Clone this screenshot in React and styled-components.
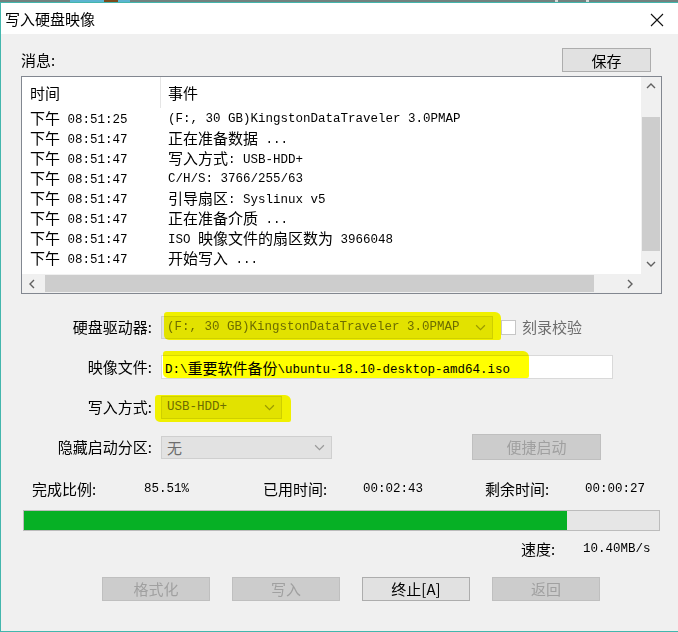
import React from 'react';
import styled, { createGlobalStyle } from 'styled-components';

const GlobalStyle = createGlobalStyle`
  html, body { margin: 0; padding: 0; background: #f0f0f0; }
  body { font-family: "Noto Sans CJK SC", "Noto Sans", sans-serif; color: #000; }
  * { box-sizing: border-box; }
`;

const TEAL = '#43b6ad';
const UI = '"Noto Sans CJK SC", "Noto Sans", sans-serif';
const MONO = '"Liberation Mono", "Noto Sans CJK SC", monospace';

const Frame = styled.div`
  width: 678px;
  height: 632px;
  display: flex;
  flex-direction: column;
  overflow: hidden;
`;

const DesktopStrip = styled.div`
  height: 2px;
  flex: none;
  background: linear-gradient(90deg, #73817f 0 70px, #5cb4d0 70px 104px, #7b4a1c 104px 118px, #5cb4d0 118px 130px, #73817f 130px 555px, #d8d8d8 555px 558px, #73817f 558px 586px, #d8d8d8 586px 589px, #73817f 589px);
`;

const Window = styled.div`
  flex: 1;
  display: flex;
  flex-direction: column;
  border-left: 1px solid ${TEAL};
  border-top: 1px solid ${TEAL};
  border-bottom: 1px solid ${TEAL};
  background: #f0f0f0;
`;

const TitleBar = styled.div`
  height: 31px;
  flex: none;
  background: #fff;
  display: flex;
  align-items: center;
  justify-content: space-between;
  padding: 0 13px 0 4px;
`;

const TitleText = styled.span`
  font-family: ${UI};
  font-size: 15px;
  line-height: 20px;
  margin-top: 1px;
`;

const CloseBtn = styled.div`
  width: 16px;
  height: 16px;
  display: flex;
  align-items: center;
  justify-content: center;
  margin-top: 2px;
`;

const Body = styled.div`
  flex: 1;
  display: flex;
  flex-direction: column;
`;

const MsgSection = styled.div`
  padding: 0 16px 0 20px;
  display: flex;
  flex-direction: column;
`;

const MsgHeader = styled.div`
  margin-top: 14px;
  height: 24px;
  display: flex;
  align-items: center;
  justify-content: space-between;
`;

const Label = styled.span`
  font-family: ${UI};
  font-size: 15px;
  line-height: 20px;
  color: ${p => (p.$disabled ? '#6d6d6d' : '#000')};
`;

const SaveButton = styled.div`
  width: 89px;
  height: 24px;
  margin-right: 11px;
  background: #e1e1e1;
  border: 1px solid #adadad;
  display: flex;
  align-items: center;
  justify-content: center;
  font-family: ${UI};
  font-size: 15px;
`;

const ListBox = styled.div`
  margin-top: 4px;
  height: 218px;
  border: 1px solid #828790;
  background: #fff;
  display: grid;
  grid-template-columns: 1fr 20px;
  grid-template-rows: 1fr 19px;
`;

const ListContent = styled.div`
  overflow: hidden;
`;

const ListHeader = styled.div`
  height: 31px;
  display: flex;
`;

const HeaderCell = styled.div`
  width: ${p => p.$w || 'auto'};
  flex: ${p => (p.$w ? 'none' : 1)};
  padding-left: ${p => p.$pad}px;
  border-right: ${p => (p.$divider ? '1px solid #e5e5e5' : 'none')};
  font-family: ${UI};
  font-size: 15px;
  line-height: 31px;
`;

const ListRow = styled.div`
  height: 20px;
  display: flex;
  align-items: center;
  font-family: ${MONO};
  font-size: 12.5px;
  line-height: 20px;
  white-space: nowrap;
  padding-top: 1px;
`;

const Cell = styled.div`
  width: ${p => p.$w || 'auto'};
  flex: ${p => (p.$w ? 'none' : 1)};
  padding-left: ${p => p.$pad}px;
`;

const Han = styled.span`
  font-family: "Noto Sans CJK SC", sans-serif;
  font-size: 15px;
  vertical-align: -1px;
`;

const VScroll = styled.div`
  background: #f0f0f0;
  display: flex;
  flex-direction: column;
`;

const HScroll = styled.div`
  background: #f0f0f0;
  display: flex;
  align-items: center;
`;

const Corner = styled.div`
  background: #f0f0f0;
`;

const ArrowBox = styled.div`
  flex: none;
  width: ${p => p.$w || 20}px;
  height: ${p => p.$h || 19}px;
  display: flex;
  align-items: center;
  justify-content: center;
`;

const VTrack = styled.div`
  flex: 1;
  padding: 0 1px;
`;

const VThumb = styled.div`
  margin-top: 20px;
  height: 134px;
  background: #cdcdcd;
`;

const HTrack = styled.div`
  flex: 1;
  height: 100%;
  display: flex;
  align-items: center;
`;

const HThumb = styled.div`
  margin-left: 1px;
  width: 549px;
  height: 17px;
  background: #cdcdcd;
`;

const Form = styled.div`
  margin-top: 21px;
  display: flex;
  flex-direction: column;
  gap: 16px;
`;

const FormRow = styled.div`
  height: 24px;
  display: flex;
  align-items: center;
`;

const FieldLabel = styled.span`
  width: 151px;
  margin-right: 9px;
  text-align: right;
  font-family: ${UI};
  font-size: 15px;
  line-height: 20px;
`;

const Combo = styled.div`
  position: relative;
  width: ${p => p.$w}px;
  height: 23px;
  background: #e2e2e2;
  border: 1px solid #cfcfcf;
  display: flex;
  align-items: center;
  justify-content: space-between;
  padding-left: 5px;
  color: #6d6d6d;
  font-family: ${MONO};
  font-size: 12.5px;
  white-space: nowrap;
`;

const ComboArrow = styled.div`
  width: 24px;
  height: 100%;
  display: flex;
  align-items: center;
  justify-content: center;
`;

const TextInput = styled.div`
  position: relative;
  width: 452px;
  height: 24px;
  background: #fff;
  border: 1px solid #d9d9d9;
  display: flex;
  align-items: center;
  padding-left: 3px;
  font-family: ${MONO};
  font-size: 12.5px;
  white-space: nowrap;
`;

const Marker = styled.span`
  position: absolute;
  left: ${p => p.$l}px;
  top: ${p => p.$t}px;
  width: ${p => p.$w}px;
  height: ${p => p.$h}px;
  background: #ffff00;
  mix-blend-mode: multiply;
  border-radius: 3px 6px 2px 5px;
  pointer-events: none;
`;

const CheckWrap = styled.div`
  margin-left: 8px;
  display: flex;
  align-items: center;
  gap: 6px;
`;

const CheckBox = styled.div`
  width: 15px;
  height: 15px;
  background: #fff;
  border: 1px solid #c6c6c6;
`;

const Button = styled.div`
  width: ${p => p.$w || 108}px;
  height: ${p => p.$h || 24}px;
  margin-left: ${p => p.$ml || 0}px;
  background: ${p => (p.$disabled ? '#cccccc' : '#e1e1e1')};
  border: 1px solid ${p => (p.$disabled ? '#bfbfbf' : '#adadad')};
  color: ${p => (p.$disabled ? '#a0a0a0' : '#000')};
  display: flex;
  align-items: center;
  justify-content: center;
  font-family: ${UI};
  font-size: 15px;
  line-height: 20px;
`;

const StatsRow = styled.div`
  margin-top: 20px;
  height: 20px;
  padding-left: 31px;
  display: flex;
  align-items: center;
`;

const StatItem = styled.span`
  width: ${p => (p.$w ? `${p.$w}px` : 'auto')};
  flex: none;
  font-family: ${p => (p.$mono ? MONO : UI)};
  font-size: ${p => (p.$mono ? '12.5px' : '15px')};
  line-height: 20px;
`;

const Progress = styled.div`
  margin: 11px 0 0 22px;
  width: 637px;
  height: 21px;
  border: 1px solid #bcbcbc;
  background: #e6e6e6;
`;

const ProgressFill = styled.div`
  height: 100%;
  background: #06b025;
`;

const SpeedRow = styled.div`
  margin-top: 9px;
  height: 18px;
  padding-left: 520px;
  display: flex;
  align-items: center;
`;

const ButtonRow = styled.div`
  margin-top: 19px;
  padding-left: 101px;
  display: flex;
  gap: 22px;
`;

const Chevron = ({ dir, size = 8, color = '#606060', sw = 1.4 }) => {
  const paths = {
    up: 'M1 6 L5 2 L9 6',
    down: 'M1 3 L5 7 L9 3',
    left: 'M6 1 L2 5 L6 9',
    right: 'M4 1 L8 5 L4 9',
  };
  return (
    <svg width={size + 2} height={size + 2} viewBox="0 0 10 10">
      <path d={paths[dir]} fill="none" stroke={color} strokeWidth={sw} />
    </svg>
  );
};

const HAN_RE = /([\u3000-\u303f\u4e00-\u9fff\uff00-\uffef]+)/;
const Mixed = ({ text }) => (
  <>
    {text.split(HAN_RE).map((part, i) =>
      i % 2 === 1 ? <Han key={i}>{part}</Han> : <React.Fragment key={i}>{part}</React.Fragment>
    )}
  </>
);

const logs = [
  ['下午 08:51:25', '(F:, 30 GB)KingstonDataTraveler 3.0PMAP'],
  ['下午 08:51:47', '正在准备数据 ...'],
  ['下午 08:51:47', '写入方式: USB-HDD+'],
  ['下午 08:51:47', 'C/H/S: 3766/255/63'],
  ['下午 08:51:47', '引导扇区: Syslinux v5'],
  ['下午 08:51:47', '正在准备介质 ...'],
  ['下午 08:51:47', 'ISO 映像文件的扇区数为 3966048'],
  ['下午 08:51:47', '开始写入 ...'],
];

const percent = 85.51;

export default function App() {
  return (
    <>
      <GlobalStyle />
      <Frame>
        <DesktopStrip />
        <Window>
          <TitleBar>
            <TitleText>写入硬盘映像</TitleText>
            <CloseBtn>
              <svg width="14" height="14" viewBox="0 0 14 14">
                <path d="M1 1 L13 13 M13 1 L1 13" stroke="#111" strokeWidth="1.1" />
              </svg>
            </CloseBtn>
          </TitleBar>
          <Body>
            <MsgSection>
              <MsgHeader>
                <Label>消息:</Label>
                <SaveButton>保存</SaveButton>
              </MsgHeader>
              <ListBox>
                <ListContent>
                  <ListHeader>
                    <HeaderCell $w="139px" $pad={8} $divider>时间</HeaderCell>
                    <HeaderCell $pad={7}>事件</HeaderCell>
                  </ListHeader>
                  {logs.map(([t, e], i) => (
                    <ListRow key={i}>
                      <Cell $w="139px" $pad={8}><Mixed text={t} /></Cell>
                      <Cell $pad={7}><Mixed text={e} /></Cell>
                    </ListRow>
                  ))}
                </ListContent>
                <VScroll>
                  <ArrowBox $w={20} $h={20}><Chevron dir="up" /></ArrowBox>
                  <VTrack><VThumb /></VTrack>
                  <ArrowBox $w={20} $h={20}><Chevron dir="down" /></ArrowBox>
                </VScroll>
                <HScroll>
                  <ArrowBox $w={22}><Chevron dir="left" /></ArrowBox>
                  <HTrack><HThumb /></HTrack>
                  <ArrowBox $w={24}><Chevron dir="right" /></ArrowBox>
                </HScroll>
                <Corner />
              </ListBox>
            </MsgSection>

            <Form>
              <FormRow>
                <FieldLabel>硬盘驱动器:</FieldLabel>
                <Combo $w={332}>
                  <span>(F:, 30 GB)KingstonDataTraveler 3.0PMAP</span>
                  <ComboArrow><Chevron dir="down" size={9} color="#9a9a9a" sw={1.1} /></ComboArrow>
                  <Marker $l={2} $t={-5} $w={337} $h={28} />
                </Combo>
                <CheckWrap>
                  <CheckBox />
                  <Label $disabled>刻录校验</Label>
                </CheckWrap>
              </FormRow>
              <FormRow>
                <FieldLabel>映像文件:</FieldLabel>
                <TextInput>
                  <span><Mixed text={'D:\\重要软件备份\\ubuntu-18.10-desktop-amd64.iso'} /></span>
                  <Marker $l={1} $t={-5} $w={366} $h={27} />
                </TextInput>
              </FormRow>
              <FormRow>
                <FieldLabel>写入方式:</FieldLabel>
                <Combo $w={121}>
                  <span>USB-HDD+</span>
                  <ComboArrow><Chevron dir="down" size={9} color="#9a9a9a" sw={1.1} /></ComboArrow>
                  <Marker $l={-7} $t={-2} $w={136} $h={27} />
                </Combo>
              </FormRow>
              <FormRow>
                <FieldLabel>隐藏启动分区:</FieldLabel>
                <Combo $w={171}>
                  <Han>无</Han>
                  <ComboArrow><Chevron dir="down" size={9} color="#9a9a9a" sw={1.1} /></ComboArrow>
                </Combo>
                <Button $disabled $w={129} $h={26} $ml={140}>便捷启动</Button>
              </FormRow>
            </Form>

            <StatsRow>
              <StatItem $w={112}>完成比例:</StatItem>
              <StatItem $w={119} $mono>85.51%</StatItem>
              <StatItem $w={100}>已用时间:</StatItem>
              <StatItem $w={122} $mono>00:02:43</StatItem>
              <StatItem $w={100}>剩余时间:</StatItem>
              <StatItem $mono>00:00:27</StatItem>
            </StatsRow>

            <Progress>
              <ProgressFill style={{ width: `${percent}%` }} />
            </Progress>

            <SpeedRow>
              <StatItem $w={62}>速度:</StatItem>
              <StatItem $mono>10.40MB/s</StatItem>
            </SpeedRow>

            <ButtonRow>
              <Button $disabled>格式化</Button>
              <Button $disabled>写入</Button>
              <Button>终止[A]</Button>
              <Button $disabled>返回</Button>
            </ButtonRow>
          </Body>
        </Window>
      </Frame>
    </>
  );
}
